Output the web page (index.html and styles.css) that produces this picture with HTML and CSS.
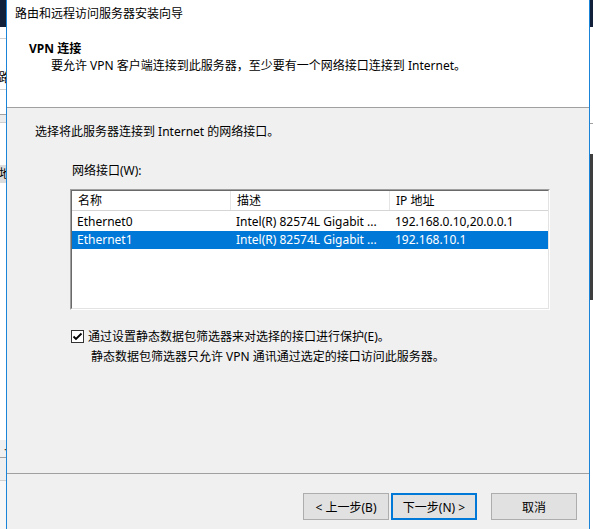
FILE: index.html
```html
<!DOCTYPE html>
<html lang="zh-CN">
<head>
<meta charset="utf-8">
<title>路由和远程访问服务器安装向导</title>
<link rel="stylesheet" href="styles.css">
</head>
<body>
<div class="bg-left">
  <div class="seg dark h27"></div>
  <div class="seg white h11 line-b"></div>
  <div class="seg white h51 line-b clip"><span class="clip-char">路</span></div>
  <div class="seg white h24 line-b2"></div>
  <div class="seg grayish h7 line-b"></div>
  <div class="seg white h42"></div>
  <div class="seg hl h18 clip"><span class="clip-char">地</span></div>
  <div class="seg white grow"></div>
  <div class="seg panel h17 line-b2 clip"><span class="plus">+</span></div>
  <div class="seg panel h22 line-b"></div>
  <div class="seg pale grow2"></div>
</div>

<div class="dialog">
  <div class="wiz-header">
    <div class="title">路由和远程访问服务器安装向导</div>
    <div class="heading">VPN 连接</div>
    <div class="desc">要允许 VPN 客户端连接到此服务器，至少要有一个网络接口连接到 Internet。</div>
  </div>

  <div class="wiz-body">
    <div class="intro">选择将此服务器连接到 Internet 的网络接口。</div>
    <div class="label">网络接口(W):</div>
    <div class="list">
      <div class="list-inner">
        <div class="lv-head">
          <div class="hcell">名称</div>
          <div class="hcell">描述</div>
          <div class="hcell last">IP 地址</div>
        </div>
        <div class="lv-rows">
          <div class="lv-row">
            <div class="cell">Ethernet0</div>
            <div class="cell">Intel(R) 82574L Gigabit ...</div>
            <div class="cell">192.168.0.10,20.0.0.1</div>
          </div>
          <div class="lv-row selected">
            <div class="cell">Ethernet1</div>
            <div class="cell">Intel(R) 82574L Gigabit ...</div>
            <div class="cell">192.168.10.1</div>
          </div>
        </div>
      </div>
    </div>
    <div class="check-row">
      <span class="checkbox"><svg width="11" height="11" viewBox="0 0 11 11"><path d="M1.5 5.5 L4 8 L9.5 2.5" fill="none" stroke="#000" stroke-width="1.8"/></svg></span>
      <span class="check-label">通过设置静态数据包筛选器来对选择的接口进行保护(E)。</span>
    </div>
    <div class="note">静态数据包筛选器只允许 VPN 通讯通过选定的接口访问此服务器。</div>
  </div>

  <div class="wiz-footer">
    <button class="btn">&lt; 上一步(B)</button>
    <button class="btn default">下一步(N) &gt;</button>
    <button class="btn cancel">取消</button>
  </div>
</div>

<div class="bg-right">
  <div class="seg dark h27"></div>
  <div class="seg white h96 line-b2"></div>
  <div class="seg white h30"></div>
  <div class="seg darkgray h146"></div>
  <div class="seg white grow"></div>
</div>
</body>
</html>
```

FILE: styles.css
```css
html, body {
  margin: 0;
  padding: 0;
}
body {
  width: 593px;
  height: 529px;
  overflow: hidden;
  display: flex;
  font-family: "Noto Sans", "Noto Sans CJK SC", sans-serif;
  font-size: 12px;
  color: #000;
  background: #fff;
}

/* background windows */
.bg-left {
  width: 6px;
  display: flex;
  flex-direction: column;
  flex-shrink: 0;
}
.bg-right {
  width: 3px;
  display: flex;
  flex-direction: column;
  flex-shrink: 0;
}
.seg { flex-shrink: 0; }
.dark { background: #13203a; }
.white { background: #fff; }
.grayish { background: #ececec; }
.hl { background: #dcdcdc; }
.panel { background: #f0f0f0; }
.pale { background: #f7f7f7; }
.darkgray { background: #3e3e3e; }
.line-b { border-bottom: 1px solid #cfcfcf; }
.line-b2 { border-bottom: 1px solid #a0a0a0; }
.h7 { height: 7px; }
.h11 { height: 11px; }
.h17 { height: 17px; }
.h18 { height: 18px; }
.h22 { height: 22px; }
.h24 { height: 24px; }
.h27 { height: 27px; }
.h30 { height: 30px; }
.h42 { height: 42px; }
.h51 { height: 51px; }
.h96 { height: 96px; }
.h146 { height: 146px; }
.grow { flex: 1; }
.grow2 { height: 48px; }
.clip {
  overflow: hidden;
  display: flex;
  justify-content: flex-end;
  align-items: center;
}
.clip-char {
  flex-shrink: 0;
  font-size: 12px;
  line-height: 14px;
  margin-right: -5px;
  color: #000;
}
.h51.clip { align-items: flex-end; padding-bottom: 4px; box-sizing: border-box; }
.plus {
  flex-shrink: 0;
  font-size: 10px;
  line-height: 10px;
  margin-right: -4px;
  color: #444;
  font-weight: bold;
}

/* dialog */
.dialog {
  width: 582px;
  flex-shrink: 0;
  border-left: 1px solid #1a84d8;
  border-right: 1px solid #1a84d8;
  background: #f0f0f0;
  display: flex;
  flex-direction: column;
}
.wiz-header {
  height: 107px;
  background: #fff;
  border-bottom: 1px solid #a0a0a0;
  flex-shrink: 0;
}
.title {
  padding: 6px 0 0 8px;
  line-height: 16px;
}
.heading {
  margin-top: 18px;
  padding-left: 22px;
  font-weight: bold;
  line-height: 17px;
}
.desc {
  padding-left: 44px;
  line-height: 17px;
}

.wiz-body {
  flex: 1;
  padding-top: 15px;
}
.intro {
  margin-left: 28px;
  line-height: 17px;
}
.label {
  margin: 22px 0 0 65px;
  line-height: 17px;
}
.list {
  margin: 10px 0 0 63px;
  width: 480px;
  height: 121px;
  box-sizing: border-box;
  border: 1px solid;
  border-color: #a0a0a0 #ffffff #ffffff #a0a0a0;
}
.list-inner {
  height: 100%;
  box-sizing: border-box;
  border: 1px solid;
  border-color: #696969 #e3e3e3 #e3e3e3 #696969;
  background: #fff;
  overflow: hidden;
}
.lv-head {
  display: grid;
  grid-template-columns: 159px 159px 1fr;
  height: 20px;
  box-sizing: border-box;
  border-bottom: 1px solid #d5d5d5;
}
.hcell {
  padding-left: 6px;
  line-height: 19px;
  border-right: 1px solid #e5e5e5;
  white-space: nowrap;
}
.hcell.last { border-right: none; }
.lv-rows { padding-top: 2px; }
.lv-row {
  display: grid;
  grid-template-columns: 159px 159px 1fr;
  height: 18px;
  line-height: 18px;
}
.cell {
  padding-left: 5px;
  white-space: nowrap;
  overflow: hidden;
}
.lv-row.selected {
  background: #0078d7;
  color: #fff;
}

.check-row {
  margin: 18px 0 0 64px;
  display: flex;
  align-items: center;
  height: 17px;
}
.checkbox {
  width: 13px;
  height: 13px;
  box-sizing: border-box;
  border: 1px solid #333;
  background: #fff;
  display: flex;
  align-items: center;
  justify-content: center;
}
.check-label {
  margin-left: 4px;
  line-height: 17px;
}
.note {
  margin: 3px 0 0 84px;
  line-height: 17px;
}

.wiz-footer {
  height: 56px;
  flex-shrink: 0;
  box-sizing: border-box;
  border-top: 1px solid #a0a0a0;
  display: flex;
  justify-content: flex-end;
  align-items: flex-start;
  padding: 19px 12px 0 0;
}
.btn {
  width: 86px;
  height: 27px;
  box-sizing: border-box;
  border: 1px solid #adadad;
  background: #e1e1e1;
  font-family: inherit;
  font-size: 12px;
  color: #000;
  padding: 0;
  margin: 0;
}
.btn.default {
  border: 2px solid #0078d7;
  margin-left: 2px;
}
.btn.cancel {
  margin-left: 14px;
}
```
